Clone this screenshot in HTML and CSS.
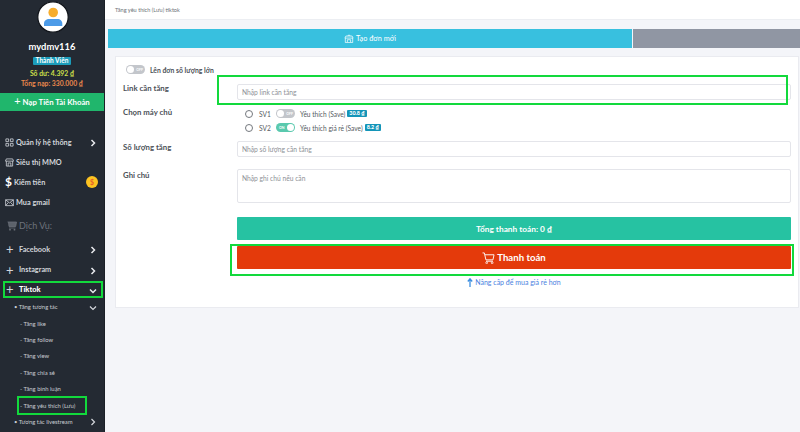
FILE: index.html
```html
<!DOCTYPE html>
<html lang="vi">
<head>
<meta charset="utf-8">
<title>Tăng yêu thích (Lưu) tiktok</title>
<link rel="stylesheet" href="styles.css">
</head>
<body>
<div class="app">
  <aside class="sidebar">
    <div class="profile">
      <svg class="avatar" viewBox="0 0 32 32" width="32" height="32"><circle cx="16" cy="16" r="15.2" fill="#fff" stroke="#10141a" stroke-width="1.2"/><circle cx="16.2" cy="11.5" r="4.8" fill="#f7ad2d"/><path d="M7 25v-2.5C7 19.5 9.5 18 12 18h8.5c2.6 0 4.8 1.800 4.800 4.500V25z" fill="#4c9be8"/></svg>
      <div class="username">mydmv116</div>
      <span class="badge-role">Thành Viên</span>
      <div class="balance">Số dư: 4.392 ₫</div>
      <div class="total">Tổng nạp: 330.000 ₫</div>
    </div>
    <a class="topup"><span class="topup-plus">+</span> Nạp Tiền Tài Khoản</a>
    <nav class="menu">
      <div class="item"><svg class="ic" viewBox="0 0 10 10"><path d="M1 1h3v3H1zM6 1h3v3H6zM1 6h3v3H1zM6 6h3v3H6z" fill="none" stroke="#cfd3d9" stroke-width=".9"/></svg><span class="grow">Quản lý hệ thống</span><svg class="chev" viewBox="0 0 6 8"><path d="M1.500 1l3 3-3 3" fill="none" stroke="#e8eaee" stroke-width="1.500"/></svg></div>
      <div class="item"><svg class="ic" viewBox="0 0 10 10"><path d="M1.500 1h7l1 2.500H.5zM1.500 3.500V9h7V3.500M3.500 9V5.500h3V9" fill="none" stroke="#cfd3d9" stroke-width=".9"/></svg><span class="grow">Siêu thị MMO</span></div>
      <div class="item"><span class="dollar">$</span><span class="grow">Kiếm tiền</span><span class="coin">$</span></div>
      <div class="item"><svg class="ic" viewBox="0 0 10 10"><path d="M.7 2h8.600v6.500H.7zM.7 2l4.300 3.500L9.300 2M.7 8.500l3-3.500M9.300 8.500l-3-3.500" fill="none" stroke="#cfd3d9" stroke-width=".9"/></svg><span class="grow">Mua gmail</span></div>
      <div class="section"><svg class="cart-s" viewBox="0 0 10 10"><path d="M.5 1h9l-.8 4.500H2L1.500 1M2 7h6.500" fill="#5c626b" stroke="#6b7079" stroke-width=".8"/><circle cx="3" cy="8.700" r=".9" fill="#6b7079"/><circle cx="7.500" cy="8.700" r=".9" fill="#6b7079"/></svg>Dịch Vụ:</div>
      <div class="item group"><span class="plus">+</span><span class="grow">Facebook</span><svg class="chev" viewBox="0 0 6 8"><path d="M1.500 1l3 3-3 3" fill="none" stroke="#e8eaee" stroke-width="1.500"/></svg></div>
      <div class="item group"><span class="plus">+</span><span class="grow">Instagram</span><svg class="chev" viewBox="0 0 6 8"><path d="M1.500 1l3 3-3 3" fill="none" stroke="#e8eaee" stroke-width="1.500"/></svg></div>
      <div class="item group strong marked"><span class="plus">+</span><span class="grow">Tiktok</span><svg class="chev-d" viewBox="0 0 8 6"><path d="M1 1.500l3 3 3-3" fill="none" stroke="#e8eaee" stroke-width="1.500"/></svg><i class="mark mark-tiktok"></i></div>
      <div class="sub lvl1"><span class="grow">• Tăng tương tác</span><svg class="chev-d" viewBox="0 0 8 6"><path d="M1 1.500l3 3 3-3" fill="none" stroke="#d5d8dd" stroke-width="1.200"/></svg></div>
      <div class="sub lvl2">- Tăng like</div>
      <div class="sub lvl2">- Tăng follow</div>
      <div class="sub lvl2">- Tăng view</div>
      <div class="sub lvl2">- Tăng chia sẻ</div>
      <div class="sub lvl2">- Tăng bình luận</div>
      <div class="sub lvl2 marked">- Tăng yêu thích (Lưu)<i class="mark mark-sub"></i></div>
      <div class="sub lvl1"><span class="grow">• Tương tác livestream</span><svg class="chev" viewBox="0 0 6 8"><path d="M1.500 1l3 3-3 3" fill="none" stroke="#d5d8dd" stroke-width="1.200"/></svg></div>
    </nav>
  </aside>
  <main class="main">
    <header class="crumb">Tăng yêu thích (Lưu) tiktok</header>
    <div class="tabs">
      <div class="tab tab-new"><svg class="ic-shop" viewBox="0 0 12 11"><path d="M1.500 5v5.500h9V5M1 5l1.200-2.500h7.600L11 5zM4 10V7h4v3M4.500 2.500C4.500 1 7.500 1 7.500 2.500" fill="none" stroke="#fff" stroke-width=".9"/></svg>Tạo đơn mới</div>
      <div class="tab tab-other"></div>
    </div>
    <section class="card">
      <div class="bulk">
        <span class="toggle off"><b>OFF</b></span>
        <span>Lên đơn số lượng lớn</span>
      </div>
      <div class="row row-link">
        <label class="lab">Link cần tăng</label>
        <div class="field"><input class="input" placeholder="Nhập link cần tăng"></div>
        <i class="mark mark-link"></i>
      </div>
      <div class="row row-server">
        <label class="lab">Chọn máy chủ</label>
        <div class="servers">
          <div class="sv"><span class="radio"></span><span class="svn">SV1</span><span class="toggle off"><b>OFF</b></span><span>Yêu thích (Save)</span><span class="price">30.8 ₫</span></div>
          <div class="sv"><span class="radio"></span><span class="svn">SV2</span><span class="toggle on"><b>ON</b></span><span>Yêu thích giá rẻ (Save)</span><span class="price">8.2 ₫</span></div>
        </div>
      </div>
      <div class="row row-qty">
        <label class="lab">Số lượng tăng</label>
        <div class="field"><input class="input" placeholder="Nhập số lượng cần tăng"></div>
      </div>
      <div class="row row-note">
        <label class="lab">Ghi chú</label>
        <div class="field"><textarea class="input area" placeholder="Nhập ghi chú nếu cần"></textarea></div>
      </div>
      <div class="actions">
        <div class="btn btn-total">Tổng thanh toán: 0 ₫</div>
        <div class="btn btn-pay"><svg class="ic-cart" viewBox="0 0 14 13"><path d="M.5 1h2l1.700 7.500h7.600L13 3H3.100M4.300 10h7.500" fill="none" stroke="#fff" stroke-width="1"/><circle cx="5" cy="11.700" r="1" fill="none" stroke="#fff" stroke-width=".8"/><circle cx="11" cy="11.700" r="1" fill="none" stroke="#fff" stroke-width=".8"/></svg>Thanh toán</div>
        <i class="mark mark-pay"></i>
        <a class="upgrade"><svg class="ic-up" viewBox="0 0 6 9"><path d="M3 9V2M.8 3.500L3 .8l2.200 2.700" fill="none" stroke="#3d8fe0" stroke-width="1.300"/></svg>Nâng cấp để mua giá rẻ hơn</a>
      </div>
    </section>
  </main>
</div>
</body>
</html>
```

FILE: styles.css
```css
* { box-sizing: border-box; }
html, body { margin: 0; height: 432px; overflow: hidden; }
body { font-family: Lato, "Liberation Sans", sans-serif; color: #3f444b; }
.app { display: flex; width: 800px; height: 432px; background: #f4f5f9; }

.sidebar { width: 105px; flex: none; height: 432px; background: #242a33; color: #d8dbe0; overflow: hidden; border-right: 1px solid #1b2027; }
.profile { display: flex; flex-direction: column; align-items: center; padding-top: 1px; height: 93px; }
.avatar { display: block; flex: none; margin-left: 1px; }
.username { margin-top: 6px; font-size: 9.400px; line-height: 16px; font-weight: 700; color: #fff; }
.badge-role { margin-top: 2px; background: #1b9dbb; color: #fff; font-size: 6.500px; line-height: 8px; font-weight: 700; padding: 0 3px; border-radius: 1px; }
.balance { margin-top: 3px; font-size: 6.800px; line-height: 10px; font-weight: 700; color: #cfe04a; }
.total { font-size: 6.800px; line-height: 10px; margin-top: 0; color: #e9874c; font-weight: 700; }
.topup { display: block; height: 18px; background: #20b66c; color: #fff; font-size: 7.800px; line-height: 18px; font-weight: 700; text-align: center; }
.topup-plus { font-size: 11px; font-weight: 400; line-height: 10px; }

.menu { padding-top: 21px; }
.item { position: relative; display: flex; align-items: center; height: 20px; padding: 0 8px 0 5px; font-size: 7.300px; font-weight: 700; color: #d3d6db; white-space: nowrap; }
.grow { flex: 1; }
.ic { width: 9px; height: 9px; margin-right: 2px; flex: none; }
.chev { width: 6px; height: 8px; flex: none; margin-top: 2px; }
.chev-d { width: 8px; height: 6px; flex: none; margin-right: -1px; margin-top: 3px; }
.dollar { font-size: 12px; line-height: 12px; color: #fff; margin: 0 2px 0 0; font-weight: 700; }
.coin { width: 12px; height: 12px; margin-right: -2px; border-radius: 50%; background: #fdc321; color: #e8612c; font-size: 7px; line-height: 12px; text-align: center; font-weight: 700; }
.section { display: flex; align-items: center; height: 27px; padding-left: 7px; font-size: 9px; color: #6d727b; }
.cart-s { width: 10px; height: 10px; margin-right: 2px; }
.group { padding-left: 6px; height: 20.500px; }
.plus { width: 13px; font-size: 13px; font-weight: 400; line-height: 12px; color: #d3d6db; flex: none; }
.strong { font-weight: 900; color: #fff; font-size: 7.400px; height: 18px; }
.sub { position: relative; display: flex; align-items: center; height: 16.400px; font-size: 5.900px; color: #c8ccd2; white-space: nowrap; padding-right: 8px; top: .5px; }
.lvl1 { padding-left: 14px; }
.lvl2 { padding-left: 20px; }
.mark { position: absolute; border: 2px solid #12d93c; pointer-events: none; }
.mark-tiktok { left: 3px; top: 1px; width: 100px; height: 17px; }
.mark-sub { left: 17px; top: -1px; width: 70px; height: 19px; }

.main { flex: 1; min-width: 0; display: flex; flex-direction: column; }
.crumb { height: 20px; flex: none; background: #fff; padding-left: 10px; font-size: 5.600px; line-height: 19px; color: #6d7278; border-bottom: 1px solid #eceef2; }
.tabs { display: flex; gap: 1px; margin: 9px 0 0 3px; height: 19px; flex: none; }
.tab { display: flex; align-items: center; justify-content: center; color: #fff; font-size: 7.300px; }
.tab-new { width: 524px; background: #38c0df; }
.tab-other { flex: 1; background: #9096a3; }
.ic-shop { width: 10px; height: 9px; margin-right: 2px; }

.card { width: 684px; height: 252px; margin: 8px 0 0 10px; background: #fff; border: 1px solid #eaebf0; padding: 0 7px 0 7px; flex: none; }
.bulk { display: flex; align-items: center; gap: 5px; height: 24px; margin: 0 0 0 3px; font-size: 6.800px; font-weight: 700; color: #4c5158; padding-top: 1px; }
.toggle { display: inline-flex; align-items: center; width: 19px; height: 9px; border-radius: 5px; flex: none; position: relative; font-size: 3.500px; color: #fff; }
.toggle::after { content: ""; position: absolute; top: 1px; width: 7px; height: 7px; border-radius: 50%; background: #fff; }
.toggle b { font-weight: 700; }
.off { background: #c3c6cb; justify-content: flex-end; padding-right: 2px; }
.off::after { left: 1px; }
.on { background: #5ac9ae; padding-left: 3px; }
.on::after { right: 1px; }
.row { display: flex; position: relative; }
.lab { width: 114px; flex: none; font-size: 7.800px; font-weight: 700; color: #4c5158; }
.field { flex: 1; }
.input { display: block; width: 100%; height: 16px; border: 1px solid #e4e5ea; border-radius: 2px; background: #fff; padding: 0 4px; font-family: inherit; font-size: 6.700px; color: #555; outline: none; }
.input::placeholder { color: #8d9096; opacity: 1; }
.area { height: 34px; padding-top: 3px; resize: none; overflow: hidden; line-height: 10px; }
.row-link { height: 24px; padding-top: 3px; }
.row-link .lab { margin-top: -1px; line-height: 10px; }
.mark-link { left: 94px; top: -6px; width: 571px; height: 30px; }
.row-server { height: 36px; padding-top: 3px; }
.row-server .lab { line-height: 10px; margin-top: -1px; }
.servers { display: flex; flex-direction: column; gap: 3px; padding-left: 8px; font-size: 6.600px; color: #555a60; }
.sv { display: flex; align-items: center; height: 11px; white-space: nowrap; }
.radio { width: 8px; height: 8px; border: 1px solid #74787e; border-radius: 50%; margin-right: 6px; flex: none; }
.svn { width: 15px; margin-right: 2px; }
.sv .toggle { margin-right: 5px; }
.price { background: #1495b8; color: #fff; font-size: 5.400px; line-height: 7px; font-weight: 900; padding: 0 2px; margin-left: 2px; border-radius: 1px; }
.row-qty { height: 28px; }
.row-qty .lab { line-height: 12px; }
.row-note { height: 48px; }
.row-note .lab { line-height: 10px; margin-top: 1px; }
.actions { position: relative; margin-left: 114px; display: flex; flex-direction: column; align-items: stretch; }
.btn { display: flex; align-items: center; justify-content: center; height: 23px; border-radius: 1px; color: #fff; font-size: 8.300px; font-weight: 700; }
.btn-total { background: #26c2a2; }
.btn-pay { margin-top: 6px; background: #e43a0b; font-size: 9.600px; }
.ic-cart { width: 13px; height: 12px; margin-right: 2px; }
.mark-pay { left: -7px; top: 27px; width: 564px; height: 32px; }
.upgrade { margin-top: 8px; display: flex; align-items: center; justify-content: center; gap: 2px; color: #4a7fe0; font-size: 7px; line-height: 10px; }
.ic-up { width: 6px; height: 9px; }
```
